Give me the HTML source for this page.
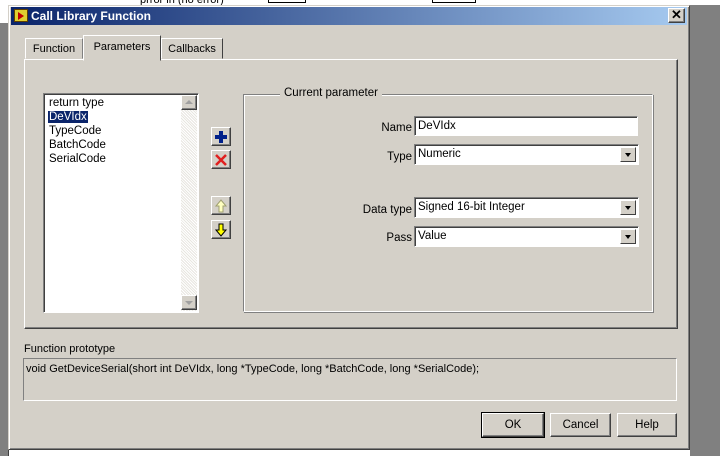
<!DOCTYPE html>
<html><head><style>
*{margin:0;padding:0;box-sizing:border-box}
body{width:720px;height:456px;position:relative;overflow:hidden;background:#808080;font-family:"Liberation Sans",sans-serif;font-size:11px;color:#000}
.a{position:absolute}
.dlg{left:8px;top:5px;width:682px;height:445px;background:#d4d0c8;border:1px solid;border-color:#d4d0c8 #404040 #404040 #d4d0c8;box-shadow:inset 1px 1px #fff,inset -1px -1px #808080}
.title{left:11px;top:7px;width:676px;height:18px;background:linear-gradient(90deg,#0a246a,#a6caf0);color:#fff;font-weight:bold;font-size:12px;line-height:18px;padding-left:20px}
.raised{border:1px solid;border-color:#fff #404040 #404040 #fff;box-shadow:inset -1px -1px #808080;background:#d4d0c8}
.sunk{border:1px solid;border-color:#808080 #fff #fff #808080;box-shadow:inset 1px 1px #404040}
.field{background:#fff;border:1px solid;border-color:#808080 #fff #fff #808080;box-shadow:inset 1px 1px #404040;padding:3px 0 0 3px;font-size:11.5px}
.dd{position:absolute;right:2px;top:2px;width:16px;height:15px;background:#d4d0c8;border:1px solid;border-color:#fff #404040 #404040 #fff}
.dd:after{content:"";position:absolute;left:4px;top:5px;border:3px solid transparent;border-top:4px solid #000}
.lbl{text-align:right;width:80px;font-size:11.5px}
.btn{text-align:center;line-height:23px;font-size:11.5px}
</style></head><body>
<div class="a" style="left:0;top:0;width:720px;height:5px;background:#fff"></div>
<div class="a" style="left:0;top:0;width:8px;height:23px;background:#fff"></div>
<div class="a" style="left:140px;top:-6px;font-size:11px">prror in (no error)</div>
<div class="a" style="left:268px;top:-2px;width:38px;height:5px;border:1px solid #000;border-top:0"></div>
<div class="a" style="left:432px;top:-2px;width:44px;height:5px;border:1px solid #000;border-top:0"></div>
<div class="a" style="left:8px;top:450px;width:682px;height:6px;background:#fff;border-left:1px solid #404040"></div>
<div class="a dlg"></div>
<div class="a title">Call Library Function</div>
<div class="a" style="left:14px;top:9px;width:14px;height:13px;background:#e0d030;border:1px solid #604000"><div style="margin:2px 0 0 3px;border:4px solid transparent;border-left:6px solid #c00000;width:0;height:0"></div></div>
<div class="a raised btn" style="left:668px;top:8px;width:17px;height:15px;line-height:12px;font-size:13px;font-weight:bold">✕</div>

<div class="a" style="left:24px;top:59px;width:654px;height:270px;border:1px solid;border-color:#fff #404040 #404040 #fff;box-shadow:inset -1px -1px #808080"></div>
<div class="a" style="left:25px;top:38px;width:58px;height:21px;border:1px solid;border-color:#fff #808080 transparent #fff;line-height:20px;text-align:center">Function</div>
<div class="a" style="left:83px;top:35px;width:78px;height:26px;background:#d4d0c8;border:1px solid;border-color:#fff #404040 transparent #fff;line-height:22px;text-align:center">Parameters</div>
<div class="a" style="left:161px;top:38px;width:62px;height:21px;border:1px solid;border-color:#fff #404040 transparent #fff;line-height:20px;text-align:center">Callbacks</div>

<div class="a sunk" style="left:43px;top:93px;width:156px;height:220px;background:#fff"></div>
<div class="a" style="left:181px;top:95px;width:16px;height:216px;background:repeating-linear-gradient(45deg,#e8e6e0 0 1px,#fff 1px 2px)"></div>
<div class="a raised" style="left:181px;top:95px;width:16px;height:15px"><div style="margin:4px 0 0 3px;border:4px solid transparent;border-bottom:4px solid #a0a0a0;border-top:0;width:0"></div></div>
<div class="a raised" style="left:181px;top:295px;width:16px;height:15px"><div style="margin:5px 0 0 3px;border:4px solid transparent;border-top:4px solid #a0a0a0;border-bottom:0;width:0"></div></div>
<div class="a" style="left:49px;top:96px;line-height:14px;font-size:11.5px">return type<br><span style="background:#0a246a;color:#fff;padding:0 1px;margin-left:-1px">DeVIdx</span><br>TypeCode<br>BatchCode<br>SerialCode</div>

<div class="a raised" style="left:211px;top:127px;width:20px;height:19px;text-align:center"><svg width="14" height="14" viewBox="0 0 14 14" style="margin-top:2px"><path d="M5 1h4v4h4v4h-4v4h-4v-4h-4v-4h4z" fill="#00208a"/></svg></div>
<div class="a raised" style="left:211px;top:150px;width:20px;height:19px;text-align:center"><svg width="14" height="14" viewBox="0 0 14 14" style="margin-top:2px"><path d="M2 2l10 10M12 2l-10 10" stroke="#e02020" stroke-width="2.5"/></svg></div>
<div class="a raised" style="left:211px;top:196px;width:20px;height:19px;text-align:center"><svg width="12" height="14" viewBox="0 0 12 14" style="margin-top:2px"><path d="M4 13h4v-6h3l-5-6-5 6h3z" fill="#ffffc0" stroke="#a0a070"/></svg></div>
<div class="a raised" style="left:211px;top:220px;width:20px;height:19px;text-align:center"><svg width="12" height="14" viewBox="0 0 12 14" style="margin-top:2px"><path d="M4 1h4v6h3l-5 6-5-6h3z" fill="#ffff00" stroke="#000"/></svg></div>

<div class="a" style="left:243px;top:94px;width:410px;height:218px;border:1px solid;border-color:#808080 #fff #fff #808080;box-shadow:inset 1px 1px #fff,1px 1px #808080"></div>
<div class="a" style="left:280px;top:87px;background:#d4d0c8;padding:0 4px;font-size:11.5px">Current parameter</div>

<div class="a lbl" style="left:332px;top:122px">Name</div>
<div class="a field" style="left:414px;top:116px;width:224px;height:20px">DeVIdx</div>
<div class="a lbl" style="left:332px;top:151px">Type</div>
<div class="a field" style="left:414px;top:144px;width:225px;height:21px">Numeric<div class="dd"></div></div>
<div class="a lbl" style="left:332px;top:204px">Data type</div>
<div class="a field" style="left:414px;top:197px;width:225px;height:21px">Signed 16-bit Integer<div class="dd"></div></div>
<div class="a lbl" style="left:332px;top:232px">Pass</div>
<div class="a field" style="left:414px;top:226px;width:225px;height:21px">Value<div class="dd"></div></div>

<div class="a" style="left:24px;top:343px">Function prototype</div>
<div class="a sunk" style="left:23px;top:358px;width:654px;height:43px;padding:4px 2px;box-shadow:none;border-color:#808080 #fff #fff #808080">void GetDeviceSerial(short int DeVIdx, long *TypeCode, long *BatchCode, long *SerialCode);</div>

<div class="a raised btn" style="left:482px;top:413px;width:62px;height:24px;outline:1px solid #000">OK</div>
<div class="a raised btn" style="left:550px;top:413px;width:61px;height:24px">Cancel</div>
<div class="a raised btn" style="left:617px;top:413px;width:60px;height:24px">Help</div>
</body></html>
